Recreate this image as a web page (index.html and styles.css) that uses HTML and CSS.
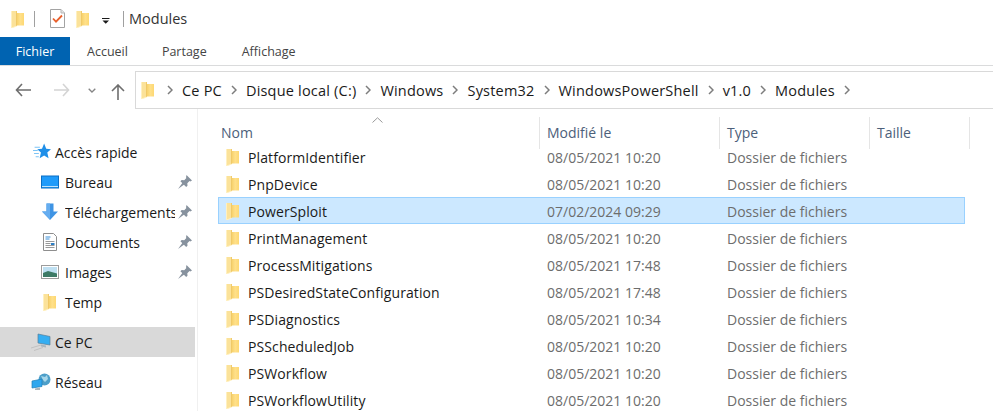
FILE: index.html
```html
<!DOCTYPE html>
<html lang="fr">
<head>
<meta charset="utf-8">
<title>Modules</title>
<link rel="stylesheet" href="styles.css">
</head>
<body>
<svg class="defs" width="0" height="0" aria-hidden="true">
  <defs>
    <linearGradient id="fg" x1="0" x2="1" y1="0" y2="0">
      <stop offset="0" stop-color="#f6d068"/>
      <stop offset="0.5" stop-color="#ffe08a"/>
      <stop offset="1" stop-color="#fdd873"/>
    </linearGradient>
    <symbol id="folder" viewBox="0 0 13 18">
      <path d="M0 1h6v15.200L2 18H0z" fill="#fff0c0"/>
      <path d="M5.500 3H13v12.500H5.500z" fill="url(#fg)"/>
      <path d="M1 1h4.500v14.600L2 17H1z" fill="#fbe29a"/>
      <path d="M5.500 1v14.800" stroke="#edc35c" stroke-width=".8"/>
    </symbol>
    <symbol id="pin" viewBox="0 0 14 14">
      <path d="M8.500 0l5.500 5.500-1.700 1-.8-.4-2.200 2.200.2 2.500-1.300 1.300-5.800-5.800 1.300-1.300 2.500.2 2.200-2.200-.4-.8z" fill="#87929e"/>
      <path d="M4.700 7.500L0 14l6.500-4.700z" fill="#87929e"/>
    </symbol>
    <symbol id="chev" viewBox="0 0 6 10">
      <path d="M1 1l4 4-4 4" fill="none" stroke="#7d7d7d" stroke-width="1.500"/>
    </symbol>
  </defs>
</svg>
<div class="window">
  <header class="titlebar">
    <svg class="i-folder-title"><use href="#folder"/></svg>
    <span class="qsep qsep-a"></span>
    <svg class="i-check" viewBox="0 0 15 19">
      <path d="M.5.500h10.500l3.500 3.500v14.500H.5z" fill="#fff" stroke="#a3a3a3"/>
      <path d="M11 .5v3.500h3.500" fill="#e4e4e4" stroke="#b5b5b5"/>
      <path d="M3 9.500l3 3.200 6-6.200" fill="none" stroke="#e8602c" stroke-width="1.800"/>
    </svg>
    <svg class="i-folder-title i-folder-title-b"><use href="#folder"/></svg>
    <svg class="i-drop" viewBox="0 0 8 6"><path d="M0 0h7.500v1H0zM.5 2.500h6.500L3.750 5.800z" fill="#1a1a1a"/></svg>
    <span class="qsep qsep-b"></span>
    <span class="title">Modules</span>
  </header>

  <nav class="tabs">
    <a class="tab tab-file">Fichier</a>
    <a class="tab tab-home">Accueil</a>
    <a class="tab tab-share">Partage</a>
    <a class="tab tab-view">Affichage</a>
  </nav>

  <div class="navbar">
    <svg class="nav-btn back" viewBox="0 0 16 14"><path d="M7 1L1.500 7 7 13M1.500 7H16" fill="none" stroke="#6e6e6e" stroke-width="1.600"/></svg>
    <svg class="nav-btn forward" viewBox="0 0 16 14"><path d="M9 1l5.500 6L9 13M14.500 7H0" fill="none" stroke="#d4d4d4" stroke-width="1.600"/></svg>
    <svg class="nav-btn recent" viewBox="0 0 8 5"><path d="M.7.700L4 4l3.300-3.300" fill="none" stroke="#858585" stroke-width="1.300"/></svg>
    <svg class="nav-btn up" viewBox="0 0 14 16"><path d="M1 7l6-6 6 6M7 1v15" fill="none" stroke="#6e6e6e" stroke-width="1.600"/></svg>
    <div class="address">
      <svg class="i-folder-addr"><use href="#folder"/></svg>
      <svg class="crumb-sep"><use href="#chev"/></svg><span class="crumb">Ce PC</span>
      <svg class="crumb-sep"><use href="#chev"/></svg><span class="crumb">Disque local (C:)</span>
      <svg class="crumb-sep"><use href="#chev"/></svg><span class="crumb">Windows</span>
      <svg class="crumb-sep"><use href="#chev"/></svg><span class="crumb">System32</span>
      <svg class="crumb-sep"><use href="#chev"/></svg><span class="crumb">WindowsPowerShell</span>
      <svg class="crumb-sep"><use href="#chev"/></svg><span class="crumb">v1.0</span>
      <svg class="crumb-sep"><use href="#chev"/></svg><span class="crumb">Modules</span>
      <svg class="crumb-sep"><use href="#chev"/></svg>
    </div>
  </div>

  <div class="content">
    <aside class="sidebar">
      <div class="side-item head quick">
        <svg class="side-icon" viewBox="0 0 17 16">
          <path d="M10.500 0l2 5 4.500.3-3.500 3.200 1.200 5.500-4.200-2.800L6.300 14l1.200-5.500L4 5.300 8.500 5z" fill="#1f8fe8"/>
          <path d="M1.500 3.500h5M0 6.500h4.500M1 9.500h4.500M2.500 12.500h3" stroke="#7cc4f5" stroke-width="1"/>
        </svg>
        <span class="side-label">Accès rapide</span>
      </div>
      <div class="side-item sub">
        <svg class="side-icon" viewBox="0 0 18 13"><rect x=".5" y=".5" width="17" height="12" fill="#1e9bfa" stroke="#0a6fc4"/><path d="M1 11h16" stroke="#bfe3fb"/></svg>
        <span class="side-label">Bureau</span>
        <svg class="pin"><use href="#pin"/></svg>
      </div>
      <div class="side-item sub">
        <svg class="side-icon" viewBox="0 0 18 17"><path d="M5.500 0h7v8H17l-8 8.500L1 8h4.500z" fill="#3f94e4"/><path d="M5.500 0h3.500v16L1 8h4.500z" fill="#65adf0"/></svg>
        <span class="side-label label-clip">Téléchargements</span>
        <svg class="pin"><use href="#pin"/></svg>
      </div>
      <div class="side-item sub">
        <svg class="side-icon" viewBox="0 0 14 18"><path d="M.5.500h10l3 3v14H.5z" fill="#fff" stroke="#8e8e8e"/><path d="M2.500 4h5M2.500 6h4" stroke="#3a8fd8"/><path d="M2.500 8.500h9M2.500 10.500h5M2.500 12.500h9M2.500 14.500h9" stroke="#9a9a9a"/><rect x="8" y="10" width="3.500" height="2" fill="#2d7fc4"/></svg>
        <span class="side-label">Documents</span>
        <svg class="pin"><use href="#pin"/></svg>
      </div>
      <div class="side-item sub">
        <svg class="side-icon" viewBox="0 0 18 14"><rect x=".5" y=".5" width="17" height="13" fill="#fff" stroke="#9c9c9c"/><rect x="2" y="2" width="14" height="10" fill="#bfe0f2"/><path d="M2 8l5-2 9 2.500V12H2z" fill="#3d7a66"/></svg>
        <span class="side-label">Images</span>
        <svg class="pin"><use href="#pin"/></svg>
      </div>
      <div class="side-item sub">
        <svg class="side-icon folder-icon"><use href="#folder"/></svg>
        <span class="side-label">Temp</span>
      </div>
      <div class="side-item head pc">
        <svg class="side-icon wide" viewBox="0 0 21 18"><path d="M0 15l10-3M3 17.500l9-3" stroke="#c0c0c0"/><path d="M7 1l12 2.500V12L7 10z" fill="#35aef2" stroke="#5a7f98" stroke-width=".7"/><path d="M10 11.500l5 1v2l-5-1z" fill="#a9b6bf"/></svg>
        <span class="side-label">Ce PC</span>
      </div>
      <div class="side-item head net">
        <svg class="side-icon wide" viewBox="0 0 21 18"><circle cx="13.500" cy="6.500" r="6" fill="#4d9fc9"/><path d="M10 3l4 1 2-2 1 4-3 3-2-2z" fill="#a8d7ea"/><path d="M1 8l10-2v7.500L1 15z" fill="#2fa7ee" stroke="#217fb8" stroke-width=".7"/><path d="M4 15.500l5-1v2.500H4z" fill="#aab4ba"/></svg>
        <span class="side-label">Réseau</span>
      </div>
    </aside>

    <main class="files">
      <svg class="sort" viewBox="0 0 11 6"><path d="M.5 5.500l5-4.700 5 4.700" fill="none" stroke="#9a9a9a"/></svg>
      <div class="thead">
        <div class="th c-name">Nom</div>
        <div class="th c-date">Modifié le</div>
        <div class="th c-type">Type</div>
        <div class="th c-size">Taille</div>
      </div>
      <div class="rows">
        <div class="row"><svg class="row-icon"><use href="#folder"/></svg><span class="c-name name">PlatformIdentifier</span><span class="c-date">08/05/2021 10:20</span><span class="c-type">Dossier de fichiers</span></div>
        <div class="row"><svg class="row-icon"><use href="#folder"/></svg><span class="c-name name">PnpDevice</span><span class="c-date">08/05/2021 10:20</span><span class="c-type">Dossier de fichiers</span></div>
        <div class="row selected"><svg class="row-icon"><use href="#folder"/></svg><span class="c-name name">PowerSploit</span><span class="c-date">07/02/2024 09:29</span><span class="c-type">Dossier de fichiers</span></div>
        <div class="row"><svg class="row-icon"><use href="#folder"/></svg><span class="c-name name">PrintManagement</span><span class="c-date">08/05/2021 10:20</span><span class="c-type">Dossier de fichiers</span></div>
        <div class="row"><svg class="row-icon"><use href="#folder"/></svg><span class="c-name name">ProcessMitigations</span><span class="c-date">08/05/2021 17:48</span><span class="c-type">Dossier de fichiers</span></div>
        <div class="row"><svg class="row-icon"><use href="#folder"/></svg><span class="c-name name">PSDesiredStateConfiguration</span><span class="c-date">08/05/2021 17:48</span><span class="c-type">Dossier de fichiers</span></div>
        <div class="row"><svg class="row-icon"><use href="#folder"/></svg><span class="c-name name">PSDiagnostics</span><span class="c-date">08/05/2021 10:34</span><span class="c-type">Dossier de fichiers</span></div>
        <div class="row"><svg class="row-icon"><use href="#folder"/></svg><span class="c-name name">PSScheduledJob</span><span class="c-date">08/05/2021 10:20</span><span class="c-type">Dossier de fichiers</span></div>
        <div class="row"><svg class="row-icon"><use href="#folder"/></svg><span class="c-name name">PSWorkflow</span><span class="c-date">08/05/2021 10:20</span><span class="c-type">Dossier de fichiers</span></div>
        <div class="row"><svg class="row-icon"><use href="#folder"/></svg><span class="c-name name">PSWorkflowUtility</span><span class="c-date">08/05/2021 10:20</span><span class="c-type">Dossier de fichiers</span></div>
      </div>
    </main>
  </div>
</div>
</body>
</html>
```

FILE: styles.css
```css
* { box-sizing: border-box; }
html, body { margin: 0; padding: 0; height: 100%; overflow: hidden; background: #fff; }
body { font-family: "Open Sans", "Noto Sans", "Liberation Sans", sans-serif; font-size: 14px; color: #1a1a1a; }
svg { display: block; flex: none; }
.defs { position: absolute; }
.window { width: 993px; height: 411px; display: flex; flex-direction: column; overflow: hidden; }

/* Title bar */
.titlebar { height: 37px; display: flex; align-items: center; padding-left: 11px; }
.i-folder-title { width: 13px; height: 18px; margin-top: 1px; }
.i-folder-title-b { margin-left: 11px; }
.qsep { width: 1px; height: 16px; background: #a0a0a0; }
.qsep-a { margin-left: 10px; }
.i-check { width: 15px; height: 19px; margin-left: 15px; }
.i-drop { width: 8px; height: 6px; margin-left: 13px; margin-top: 4px; }
.qsep-b { margin-left: 13px; }
.title { margin-left: 5px; font-size: 14.500px; color: #333; }

/* Ribbon tabs */
.tabs { height: 29px; display: flex; align-items: stretch; border-bottom: 1px solid #dadbdc; font-size: 12.500px; color: #444; }
.tab { display: flex; align-items: center; justify-content: center; }
.tab-file { width: 70px; height: 28px; background: #0063b1; color: #fff; }
.tab-home { margin-left: 17px; }
.tab-share { margin-left: 34px; }
.tab-view { margin-left: 35px; }

/* Navigation bar */
.navbar { height: 38px; margin-top: 5px; display: flex; align-items: center; }
.back { width: 16px; height: 14px; margin-left: 15px; }
.forward { width: 16px; height: 14px; margin-left: 23px; }
.recent { width: 8px; height: 5px; margin-left: 18px; }
.up { width: 14px; height: 16px; margin-left: 15px; margin-top: 3px; }
.address { flex: 1; height: 38px; margin-left: 10px; border: 1px solid #d9d9d9; border-right: 0; display: flex; align-items: center; padding-left: 5px; font-size: 14.500px; letter-spacing: 0.2px; color: #1a1a1a; }
.i-folder-addr { width: 13px; height: 18px; margin-right: 13px; }
.crumb-sep { width: 6px; height: 10px; }
.crumb { margin: 0 9px; }

/* Content */
.content { flex: 1; display: flex; min-height: 0; }

.sidebar { width: 198px; flex: none; border-right: 1px solid #f0f0f0; padding-top: 28px; font-size: 14px; }
.side-item { height: 30px; width: 195px; display: flex; align-items: center; position: relative; }
.side-item.head { padding-left: 33px; }
.side-item.sub { padding-left: 41px; }
.side-icon { width: 18px; height: 18px; margin-right: 6px; }
.quick .side-icon { margin-right: 4px; }
.side-label { white-space: nowrap; color: #1a1a1a; }
.label-clip { width: 110px; overflow: hidden; flex: none; }
.folder-icon { width: 13px; height: 18px; margin-left: 2px; margin-right: 9px; }
.pin { position: absolute; left: 178px; top: 8px; width: 14px; height: 14px; }
.side-item.pc { margin-top: 10px; background: #d9d9d9; padding-left: 31px; }
.side-item.net { margin-top: 10px; padding-left: 31px; }
.wide { width: 21px; height: 18px; margin-right: 3px; }

/* File list */
.files { flex: 1; min-width: 0; position: relative; }
.sort { position: absolute; left: 174px; top: 8px; width: 11px; height: 6px; }
.thead { display: flex; height: 32px; margin-top: 8px; padding-left: 22px; font-size: 14px; color: #4c607a; }
.th { height: 32px; padding-left: 7px; padding-top: 6px; border-right: 1px solid #e5e5e5; }
.th.c-name { width: 320px; padding-left: 1px; }
.th.c-date { width: 180px; }
.th.c-type { width: 150px; }
.th.c-size { width: 100px; }
.rows { margin-top: -6px; }
.row { height: 27px; width: 747px; margin-left: 20px; display: flex; align-items: center; color: #6d6d6d; border: 1px solid transparent; }
.row span { padding-top: 2px; }
.row.selected { background: #cce8ff; border-color: #99d1ff; }
.row-icon { width: 13px; height: 18px; margin-left: 7px; flex: none; }
.row .name { color: #1a1a1a; width: 308px; padding-left: 9px; letter-spacing: 0.1px; }
.row .c-date { width: 180px; }
.row .c-type { width: 150px; }
```
